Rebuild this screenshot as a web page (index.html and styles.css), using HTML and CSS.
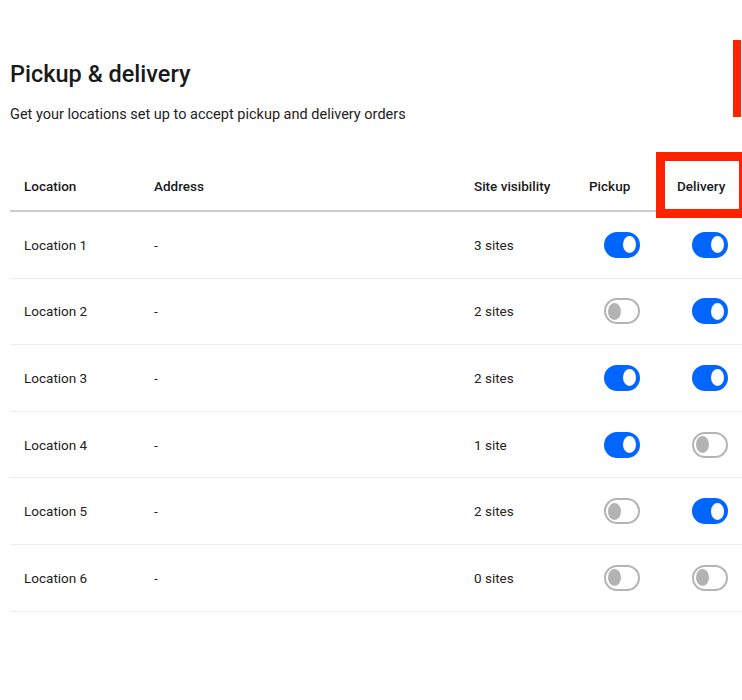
FILE: index.html
```html
<!DOCTYPE html>
<html lang="en">
<head>
<meta charset="utf-8">
<title>Pickup &amp; delivery</title>
<link rel="stylesheet" href="styles.css">
</head>
<body>
<div class="page">
  <h1 class="title">Pickup &amp; delivery</h1>
  <p class="subtitle">Get your locations set up to accept pickup and delivery orders</p>

  <div class="table">
    <div class="row head">
      <div class="cell">Location</div>
      <div class="cell">Address</div>
      <div class="cell">Site visibility</div>
      <div class="cell">Pickup</div>
      <div class="cell">Delivery</div>
    </div>
    <div class="row">
      <div class="cell">Location 1</div>
      <div class="cell">-</div>
      <div class="cell">3 sites</div>
      <div class="cell tcell"><span class="toggle on"></span></div>
      <div class="cell tcell"><span class="toggle on"></span></div>
    </div>
    <div class="row">
      <div class="cell">Location 2</div>
      <div class="cell">-</div>
      <div class="cell">2 sites</div>
      <div class="cell tcell"><span class="toggle"></span></div>
      <div class="cell tcell"><span class="toggle on"></span></div>
    </div>
    <div class="row">
      <div class="cell">Location 3</div>
      <div class="cell">-</div>
      <div class="cell">2 sites</div>
      <div class="cell tcell"><span class="toggle on"></span></div>
      <div class="cell tcell"><span class="toggle on"></span></div>
    </div>
    <div class="row">
      <div class="cell">Location 4</div>
      <div class="cell">-</div>
      <div class="cell">1 site</div>
      <div class="cell tcell"><span class="toggle on"></span></div>
      <div class="cell tcell"><span class="toggle"></span></div>
    </div>
    <div class="row">
      <div class="cell">Location 5</div>
      <div class="cell">-</div>
      <div class="cell">2 sites</div>
      <div class="cell tcell"><span class="toggle"></span></div>
      <div class="cell tcell"><span class="toggle on"></span></div>
    </div>
    <div class="row">
      <div class="cell">Location 6</div>
      <div class="cell">-</div>
      <div class="cell">0 sites</div>
      <div class="cell tcell"><span class="toggle"></span></div>
      <div class="cell tcell"><span class="toggle"></span></div>
    </div>
  </div>
</div>
<div class="mark-bar"></div>
<div class="mark-box"></div>
</body>
</html>
```

FILE: styles.css
```css
html, body {
  margin: 0;
  padding: 0;
  background: #ffffff;
}
body {
  font-family: Roboto, "Liberation Sans", sans-serif;
  color: #222222;
  overflow: hidden;
}
.page {
  padding: 59px 0 0 10px;
}
.title {
  margin: 0;
  font-size: 23.5px;
  line-height: 30px;
  font-weight: 500;
  color: #1a1a1a;
}
.subtitle {
  margin: 16px 0 0;
  font-size: 14.5px;
  line-height: 20px;
  color: #222222;
}
.table {
  margin-top: 26px;
}
.row {
  display: grid;
  grid-template-columns: 130px 320px 115px 88px 1fr;
  align-items: center;
  height: 66.6px;
  box-sizing: border-box;
  border-bottom: 1px solid #ececec;
  font-size: 13.5px;
}
.row.head {
  height: 61px;
  padding-top: 11px;
  border-bottom: 2px solid #cccccc;
  font-weight: 500;
  color: #1a1a1a;
}
.cell {
  padding-left: 14px;
  white-space: nowrap;
}
.tcell {
  padding-left: 29px;
  display: flex;
  align-items: center;
}
.toggle {
  position: relative;
  display: block;
  width: 36px;
  height: 26px;
  box-sizing: border-box;
  border-radius: 13px;
  border: 2px solid #b4b4b4;
  background: #ffffff;
}
.toggle::after {
  content: "";
  position: absolute;
  top: 2.5px;
  left: 2px;
  width: 13px;
  height: 17px;
  border-radius: 50%;
  background: #b3b3b3;
}
.toggle.on {
  border-color: #0066ff;
  background: #0066ff;
}
.toggle.on::after {
  left: auto;
  right: 2px;
  background: #ffffff;
}
.mark-bar {
  position: absolute;
  left: 733px;
  top: 40px;
  width: 8px;
  height: 77px;
  background: #ff2200;
}
.mark-box {
  position: absolute;
  left: 656px;
  top: 152px;
  width: 92px;
  height: 66px;
  box-sizing: border-box;
  border: 9px solid #ff2200;
}
```
